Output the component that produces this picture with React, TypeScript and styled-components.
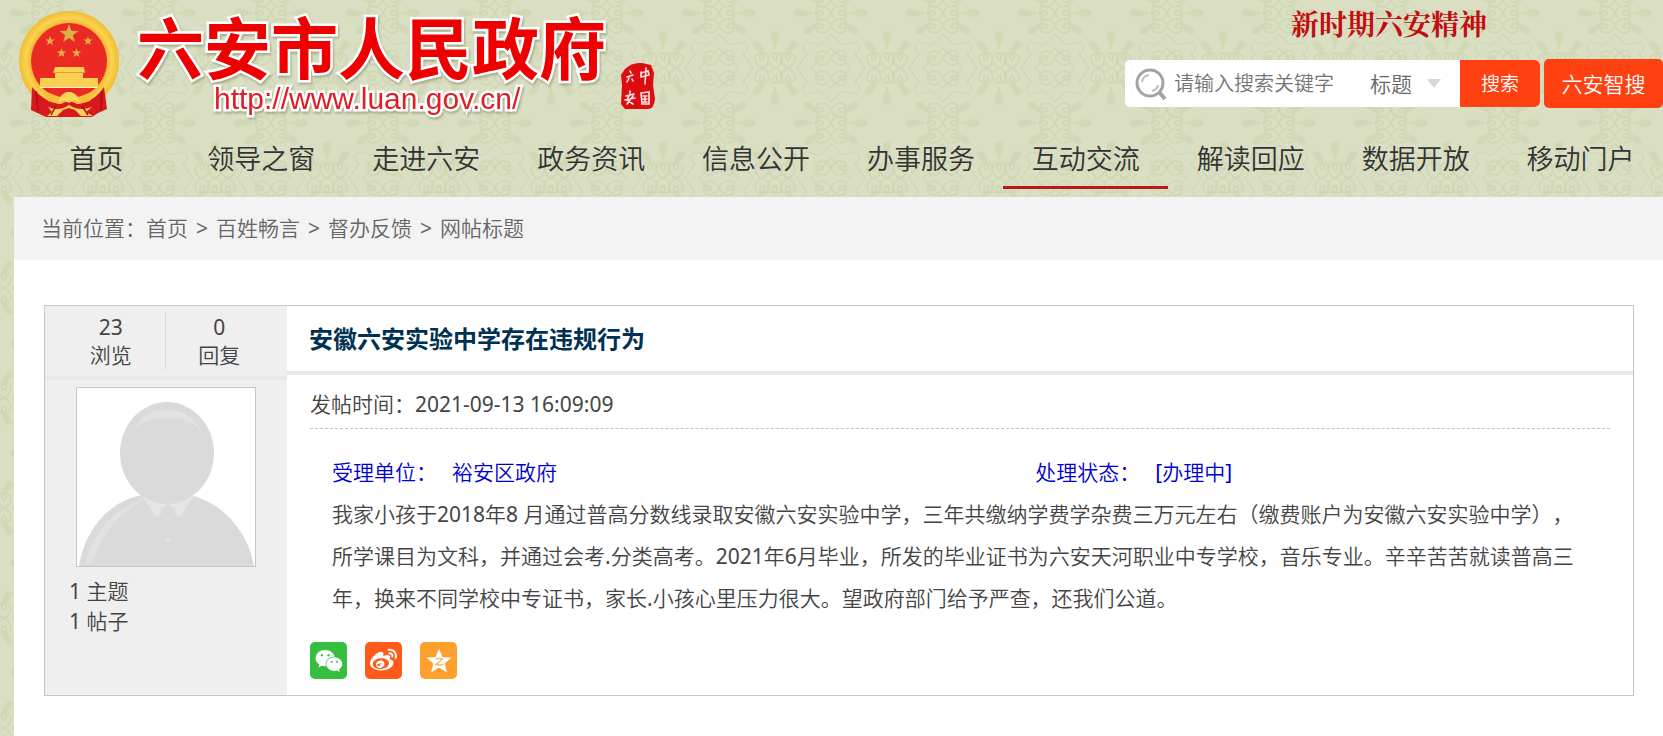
import React from "react";
import styled, { createGlobalStyle } from "styled-components";
import { FaWeibo, FaWeixin } from "react-icons/fa";

const GlobalStyle = createGlobalStyle`
  *, *::before, *::after { box-sizing: border-box; }
  body {
    margin: 0;
    background: #dadfc3;
    color: #444;
    font-family: "Noto Sans", "Noto Sans CJK SC DemiLight", "Noto Sans CJK SC", sans-serif;
    font-size: 21px;
    font-weight: 400;
    line-height: 28px;
    text-spacing-trim: space-all;
  }
  a { color: inherit; text-decoration: none; }
  h1, h2, p, dl, dd, ul { margin: 0; padding: 0; }
  ul { list-style: none; }
  button, input, select { font: inherit; color: inherit; border: 0; background: none; margin: 0; }
`;

const Page = styled.div`
  position: relative;
  display: flex;
  flex-direction: column;
  min-height: 100vh;
  padding-left: 14px;
  overflow: hidden;
`;

const Backdrop = styled.svg`
  position: absolute;
  inset: 0;
  width: 100%;
  height: 100%;
  z-index: -1;
`;

const Header = styled.header`
  display: flex;
  justify-content: space-between;
  height: 126px;
`;

const Brand = styled.a`
  display: flex;
  padding: 11px 0 0 4px;
`;

const BrandText = styled.div`
  display: flex;
  flex-direction: column;
  align-items: flex-start;
  gap: 5px;
  margin-left: 17px;
  color: #ee0000;
  -webkit-text-stroke: 5px #fff;
  paint-order: stroke fill;
  filter: drop-shadow(1px 2px 1px rgba(90, 100, 60, 0.4));
`;

const SiteName = styled.h1`
  font-family: "Noto Sans CJK SC", sans-serif;
  font-size: 67px;
  font-weight: 700;
  line-height: 67px;
`;

const SiteUrl = styled.span`
  margin-left: 77px;
  color: #e21c24;
  font-family: "Liberation Sans", Arial, sans-serif;
  font-size: 30px;
  line-height: 32px;
`;

const Seal = styled.svg`
  margin: 51px 0 0 14px;
`;

const Tools = styled.div`
  display: flex;
  flex-direction: column;
  flex: 0 0 538px;
`;

const Slogan = styled.p`
  padding: 8px 10px 0 0;
  color: #c40d10;
  font-family: "Noto Serif CJK SC", "Noto Sans CJK SC", serif;
  font-size: 28px;
  font-weight: 700;
  line-height: 30px;
  text-align: center;
`;

const ToolRow = styled.div`
  display: flex;
  align-items: center;
  gap: 4px;
  margin-top: 21px;
`;

const SearchForm = styled.form`
  display: flex;
  align-items: center;
  width: 415px;
  height: 47px;
  border-radius: 5px;
  background: #fff;
  color: #666;
  overflow: hidden;
`;

const SearchIcon = styled.svg`
  flex: none;
  margin-left: 10px;
`;

const Keyword = styled.input`
  flex: 1;
  min-width: 0;
  height: 47px;
  padding: 0 0 0 7px;
  outline: 0;
  font-size: 20px;
  &::placeholder { color: #757575; opacity: 1; }
`;

const ScopeWrap = styled.div`
  display: flex;
  align-items: center;
  flex: 0 0 90px;
  &::after {
    content: "";
    flex: none;
    margin-left: -33px;
    border: 7px solid transparent;
    border-top: 9px solid #d6d6d6;
    border-bottom: 0;
    pointer-events: none;
  }
`;

const Scope = styled.select`
  width: 90px;
  height: 47px;
  padding: 0;
  appearance: none;
  outline: 0;
`;

const ActionButton = styled.button<{ $wide?: boolean }>`
  flex: ${(p) => (p.$wide ? "1" : "0 0 80px")};
  height: ${(p) => (p.$wide ? "49px" : "47px")};
  padding: 0;
  border-radius: ${(p) => (p.$wide ? "5px" : "0 5px 5px 0")};
  background: #ff4010;
  color: #fff;
  font-size: ${(p) => (p.$wide ? "21px" : "19px")};
  cursor: pointer;
`;

const Nav = styled.nav`
  display: grid;
  grid-template-columns: repeat(10, 1fr);
  height: 71px;
  padding: 6px 0 8px;
`;

const NavLink = styled.a<{ $active?: boolean }>`
  border-bottom: 3px solid ${(p) => (p.$active ? "#bf1717" : "transparent")};
  color: #333;
  font-size: 27px;
  line-height: 54px;
  text-align: center;
  white-space: nowrap;
`;

const Main = styled.main`
  flex: 1;
  background: #fff;
`;

const Crumbs = styled.nav`
  display: flex;
  height: 63px;
  padding: 0 27px;
  background: #f3f3f3;
  color: #666;
  line-height: 63px;
`;

const Separator = styled.span`
  width: 28px;
  text-align: center;
`;

const Card = styled.article`
  display: flex;
  min-height: 391px;
  margin: 45px 29px 40px 30px;
  border: 1px solid #c6c6c6;
`;

const Author = styled.aside`
  flex: 0 0 242px;
  background: #efefef;
`;

const Stats = styled.div`
  display: flex;
  height: 74px;
  padding: 6px 14px 6px 12px;
  border-bottom: 4px solid #e8e8e8;
`;

const Stat = styled.dl`
  display: flex;
  flex-direction: column-reverse;
  justify-content: center;
  flex: 1;
  text-align: center;
  & + & { border-left: 1px solid #dcdcdc; }
`;

const Avatar = styled.svg`
  display: block;
  width: 180px;
  height: 180px;
  margin: 7px 31px 9px;
  border: 1px solid #c6c6c6;
  background: #fff;
`;

const Counts = styled.ul`
  padding-left: 24px;
  line-height: 30px;
`;

const Post = styled.div`
  flex: 1;
  min-width: 0;
`;

const PostTitle = styled.h2`
  height: 69px;
  padding: 0 22px;
  border-bottom: 4px solid #e6e6e6;
  color: #003052;
  font-family: "Noto Sans", "Noto Sans CJK SC", sans-serif;
  font-size: 24px;
  font-weight: 700;
  line-height: 65px;
`;

const PostBody = styled.div`
  padding: 0 23px;
`;

const PostTime = styled.p`
  height: 54px;
  border-bottom: 1px dashed #c4c4c4;
  line-height: 58px;
`;

const Content = styled.div`
  padding: 22px 22px 0;
  line-height: 42px;
`;

const Handling = styled.div`
  display: grid;
  grid-template-columns: 56% 1fr;
  color: #0000d0;
`;

const Field = styled.dl`
  display: flex;
  gap: 15px;
`;

const Share = styled.div`
  display: flex;
  gap: 18px;
  margin-top: 23px;
`;

const ShareButton = styled.button<{ $color: string }>`
  display: grid;
  place-items: center;
  width: 37px;
  height: 37px;
  padding: 0;
  border-radius: 5px;
  background: ${(p) => p.$color};
  color: #fff;
  cursor: pointer;
`;

const NAV = ["首页", "领导之窗", "走进六安", "政务资讯", "信息公开", "办事服务", "互动交流", "解读回应", "数据开放", "移动门户"];

const CRUMBS = ["首页", "百姓畅言", "督办反馈", "网帖标题"];

function Leaf({ angle }: { angle: number }) {
  const side = angle % 180 !== 0;
  return (
    <path
      transform={`rotate(${angle})${side ? " scale(.9)" : ""}`}
      d="M16 0C22-1 27-4 33-4Q37-3 37 0Q37 3 33 4C27 4 22 1 16 0Z"
      fill="#d1d8b4"
    />
  );
}

function Damask() {
  const corners = [[0, 0], [112, 0], [0, 110], [112, 110]];
  return (
    <Backdrop aria-hidden="true">
      <defs>
        <g id="curls" fill="none" stroke="#d0d7b4" strokeWidth="1.6">
          <path d="M0 0C3-8 13-9 15-3C16 3 8 4 8-1" />
          <path d="M0 0C3 8 13 9 15 3C16-3 8-4 8 1" />
          <path d="M0 0C-3-8-13-9-15-3C-16 3-8 4-8-1" />
          <path d="M0 0C-3 8-13 9-15 3C-16-3-8-4-8 1" />
        </g>
        <g id="flower">
          <use href="#curls" />
          <use href="#curls" y="13" />
          <use href="#curls" y="-13" />
          {[-38, 0, 38, 142, 180, 218].map((a) => <Leaf key={a} angle={a} />)}
        </g>
        <g id="medallion" fill="none" stroke="#d1d8b7" strokeWidth="1.5">
          <use href="#curls" y="-10" />
          <use href="#curls" y="10" />
          <path d="M0-34L11-23L25-26Q32-20 24-14L34 0L24 14Q32 20 25 26L11 23L0 34L-11 23L-25 26Q-32 20-24 14L-34 0L-24-14Q-32-20-25-26L-11-23Z" />
          <path d="M-20 0L0-20L20 0L0 20Z" />
        </g>
        <pattern id="damask" x="-9" y="-42" width="112" height="110" patternUnits="userSpaceOnUse">
          <rect width="112" height="110" fill="#dadfc3" />
          <use href="#flower" x="56" y="55" />
          <use href="#medallion" x="56" y="0" />
          <use href="#medallion" x="56" y="110" />
          {corners.map(([x, y]) => (
            <use key={`${x}-${y}`} href="#flower" transform={`translate(${x} ${y}) rotate(90)`} />
          ))}
        </pattern>
      </defs>
      <rect width="100%" height="100%" fill="url(#damask)" />
    </Backdrop>
  );
}

const STAR = "M0-10L2.4-3.2L9.5-3.1L3.8 1.2L5.9 8.1L0 4L-5.9 8.1L-3.8 1.2L-9.5-3.1L-2.4-3.2Z";

function Emblem() {
  return (
    <svg width="102" height="107" viewBox="0 0 102 107" aria-hidden="true">
      <defs>
        <radialGradient id="gold" cx=".5" cy=".5" r=".5">
          <stop offset=".74" stopColor="#efb230" />
          <stop offset=".86" stopColor="#fbd34f" />
          <stop offset="1" stopColor="#f0bd35" />
        </radialGradient>
      </defs>
      <circle cx="51" cy="50" r="50" fill="url(#gold)" />
      <path d="M14 76Q27 92 43 93L51 88L59 93Q75 92 86 76L89 98L80 102L74 106H28L13 99Z" fill="#d9181e" />
      <circle cx="51" cy="50" r="38" fill="#ec2a24" />
      <g fill="#dfb145">
        <path d={STAR} transform="translate(51 23)" />
        <path d={STAR} transform="translate(32 30) scale(.5)" />
        <path d={STAR} transform="translate(70 30) scale(.5)" />
        <path d={STAR} transform="translate(43.5 42) scale(.5)" />
        <path d={STAR} transform="translate(58.5 42) scale(.5)" />
      </g>
      <path d="M37 56H66L67 62H65V67H80V76H22V67H37V62H35Z" fill="#fbd052" />
      <path d="M35 61.5H67" stroke="#dda033" strokeWidth="1" />
      <path d="M22 76H80L79 77H23Z" fill="#fff0d0" />
      <path d="M23 79L42 86Q51 76 60 86L79 79L72 90L60 93Q51 88 42 93L30 90Z" fill="#f6bf3e" />
      <path d="M42 86Q51 76 60 86L62 91L56 89L51 92L46 89L40 91Z" fill="#fbd55a" />
      <path d="M30 96Q41 101 51 94Q61 101 74 96L68 101L75 105H63L57 99L51 97L45 99L39 105H29L34 101Z" fill="#f8d05a" />
      <path d="M18 80L20 100M84 80L83 99M38 95L33 104M64 95L70 104" stroke="#a90e14" strokeWidth="1.5" fill="none" />
    </svg>
  );
}

export default function App() {
  return (
    <>
      <GlobalStyle />
      <Page>
        <Damask />
        <Header>
          <Brand href="#">
            <Emblem />
            <BrandText>
              <SiteName>六安市人民政府</SiteName>
              <SiteUrl>http://www.luan.gov.cn/</SiteUrl>
            </BrandText>
            <Seal width="36" height="48" viewBox="0 0 36 48" aria-hidden="true">
              <path d="M5 7Q12 0 22 1L31 3L34 11L33 23L35 37Q34 47 28 47H5L1 42L2 23L1 13Z" fill="#dc0c10" />
              <g fill="none" stroke="#ffe9e4" strokeWidth="1.6" strokeLinecap="round">
                <path d="M21 10V15L29 13L28 9L21 11M26 6L25 22" />
                <path d="M21 31L29 30L29 42H22ZM23 34H27M25 34V39M23 37H27M23 40H27" />
                <path d="M10 9L11 11M7 15L13 13M9 16L7 20M12 17L13 19" />
                <path d="M10 29V31M6 34L14 32M10 32L7 38L13 42M13 34L7 42M5 38L15 36" />
              </g>
            </Seal>
          </Brand>
          <Tools>
            <Slogan>新时期六安精神</Slogan>
            <ToolRow>
              <SearchForm onSubmit={(e) => e.preventDefault()}>
                <SearchIcon width="32" height="32" viewBox="0 0 32 32" fill="none" aria-hidden="true">
                  <circle cx="15" cy="15" r="13" stroke="#a3a3a3" strokeWidth="3" />
                  <path d="M7 14A8 8 0 0 1 14 7M23 17A8 8 0 0 1 17 23" stroke="#bcbcbc" strokeWidth="2" />
                  <path d="M24 24L30 31" stroke="#a3a3a3" strokeWidth="4" />
                </SearchIcon>
                <Keyword type="text" aria-label="搜索关键字" placeholder="请输入搜索关键字" />
                <ScopeWrap>
                  <Scope aria-label="搜索范围" defaultValue="标题">
                    <option>标题</option>
                    <option>内容</option>
                  </Scope>
                </ScopeWrap>
                <ActionButton type="submit">搜索</ActionButton>
              </SearchForm>
              <ActionButton type="button" $wide>六安智搜</ActionButton>
            </ToolRow>
          </Tools>
        </Header>
        <Nav>
          {NAV.map((name) => (
            <NavLink key={name} href="#" $active={name === "互动交流"}>{name}</NavLink>
          ))}
        </Nav>
        <Main>
          <Crumbs>
            <span>当前位置：</span>
            {CRUMBS.map((name, i) => (
              <React.Fragment key={name}>
                {i > 0 && <Separator>&gt;</Separator>}
                <a href="#">{name}</a>
              </React.Fragment>
            ))}
          </Crumbs>
          <Card>
            <Author>
              <Stats>
                <Stat><dt>浏览</dt><dd>23</dd></Stat>
                <Stat><dt>回复</dt><dd>0</dd></Stat>
              </Stats>
              <Avatar viewBox="0 0 178 178" aria-hidden="true">
                <path d="M2 178C8 140 34 112 66 107L112 107C146 114 171 144 177 178Z" fill="#dadada" />
                <path d="M8 176C15 145 37 120 70 110C43 124 24 146 15 176Z" fill="#e2e2e2" />
                <path d="M65 108L80 130L91 117L102 130L117 108Z" fill="#e5e5e5" />
                <path d="M91 115L83 122L91 130L99 122Z" fill="#dadada" />
                <ellipse cx="90" cy="65" rx="47" ry="51" fill="#dadada" />
                <path d="M56 42Q66 22 90 22Q114 22 124 42Q112 30 90 30Q68 30 56 42Z" fill="#e2e2e2" />
                <circle cx="91" cy="152" r="2" fill="#e2e2e2" />
              </Avatar>
              <Counts>
                <li>1 主题</li>
                <li>1 帖子</li>
              </Counts>
            </Author>
            <Post>
              <PostTitle>安徽六安实验中学存在违规行为</PostTitle>
              <PostBody>
                <PostTime>发帖时间：2021-09-13 16:09:09</PostTime>
                <Content>
                  <Handling>
                    <Field><dt>受理单位：</dt><dd>裕安区政府</dd></Field>
                    <Field><dt>处理状态：</dt><dd>[办理中]</dd></Field>
                  </Handling>
                  <p>
                    我家小孩于2018年8 月通过普高分数线录取安徽六安实验中学，三年共缴纳学费学杂费三万元左右（缴费账户为安徽六安实验中学），所学课目为文科，并通过会考.分类高考。2021年6月毕业，所发的毕业证书为六安天河职业中专学校，音乐专业。辛辛苦苦就读普高三年，换来不同学校中专证书，家长.小孩心里压力很大。望政府部门给予严查，还我们公道。
                  </p>
                </Content>
                <Share>
                  <ShareButton type="button" aria-label="分享到微信" $color="#36be3e"><FaWeixin size={28} /></ShareButton>
                  <ShareButton type="button" aria-label="分享到微博" $color="#ff5a19"><FaWeibo size={27} /></ShareButton>
                  <ShareButton type="button" aria-label="分享到QQ空间" $color="#ff9f2d">
                    <svg width="28" height="28" viewBox="0 0 28 28">
                      <path d="M14 1.500L17.500 10L26.500 10.700L19.700 16.500L22 25.500L14 20.600L6 25.500L8.300 16.500L1.500 10.700L10.500 10Z" fill="#fff" />
                      <path d="M10.500 12Q14 11 17.500 12L11 17.500Q15 18.500 18.500 17.500" fill="none" stroke="#ffb45c" strokeWidth="1.300" />
                    </svg>
                  </ShareButton>
                </Share>
              </PostBody>
            </Post>
          </Card>
        </Main>
      </Page>
    </>
  );
}
